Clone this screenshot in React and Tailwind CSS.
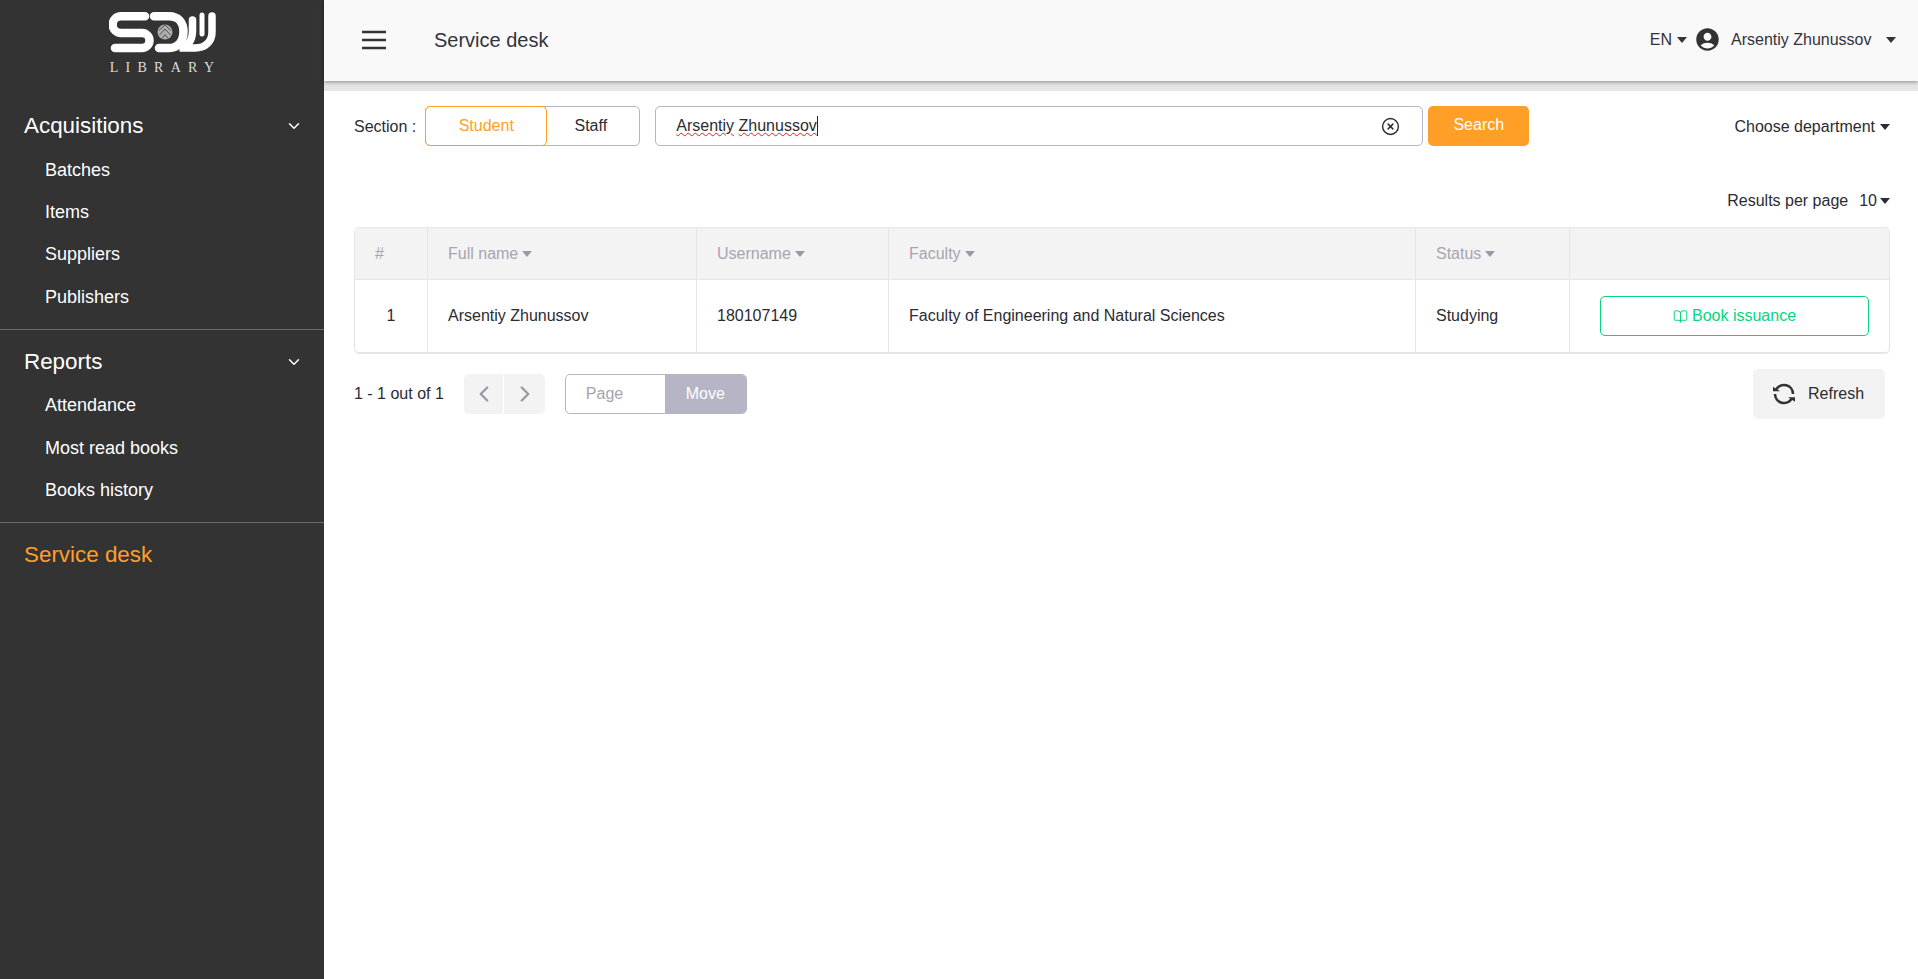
import React from 'react';
import { ChevronDown, ChevronLeft, ChevronRight, CircleX, BookOpen } from 'lucide-react';
import { MdAccountCircle } from 'react-icons/md';

const font = { fontFamily: '"Liberation Sans", Arial, sans-serif' };

function Caret({ className = '' }) {
  return (
    <svg width="10" height="6" viewBox="0 0 10 6" className={`inline-block ${className}`}>
      <path d="M0 0h10L5 6z" fill="currentColor" />
    </svg>
  );
}

function Logo() {
  return (
    <div className="flex flex-col items-center pt-[11px]">
      <svg width="107" height="43" viewBox="0 0 107 43" fill="none" stroke="#fff" strokeWidth="8.5" strokeLinecap="round">
        {/* S */}
        <path d="M36 5.300H12a8.350 8.350 0 0 0 0 16.700H33a7.500 7.500 0 0 1 0 15H6" />
        {/* D */}
        <path d="M45 5.300H60c9 0 14.500 6 14.500 15.500S69 37 60 37H50" />
        {/* W */}
        <path d="M83.500 9V20c0 9-5 17-13 17H86c11 0 17-7 17-16V5" strokeWidth="7.500" />
        <path d="M93 4V23" strokeWidth="5" />
        <circle cx="56" cy="21" r="7.500" fill="#b0b0b0" stroke="none" />
        <path d="M50.500 24l5.500-6 5.500 6M53 27.500l3-4 3 4M50 19.500l6-5.500 6 5.500" stroke="#333" strokeWidth="0.800" strokeLinecap="butt" />
      </svg>
      <div className="ml-[7px] mt-[7px] text-[14px] leading-[14px] tracking-[0.52em] text-[#ddd]" style={{ fontFamily: '"Liberation Serif", serif' }}>
        LIBRARY
      </div>
    </div>
  );
}

function NavGroup({ title, items }) {
  return (
    <div className="border-b border-[#6b6b6b] pb-[10px]">
      <div className="flex h-[42px] items-center justify-between pl-6 pr-[21px] text-[22.400px] text-white">
        <span>{title}</span>
        <ChevronDown size={18} strokeWidth={2} />
      </div>
      <div className="flex flex-col pt-[2px]">
        {items.map((item) => (
          <a key={item} className="flex h-[42.400px] items-center pl-[45px] text-[18px] text-white">{item}</a>
        ))}
      </div>
    </div>
  );
}

function HeadCell({ label, className }) {
  return (
    <div className={`flex items-center gap-[4px] border-r border-[#e6e6e6] pl-5 ${className}`}>
      {label}
      <Caret className="text-[#9a9aa4]" />
    </div>
  );
}

export default function App() {
  return (
    <div className="flex min-h-screen bg-white text-[16px] text-[#2b2b33]" style={font}>
      <aside className="w-[324px] shrink-0 bg-[#333333]">
        <Logo />
        <div className="mt-[30px]">
          <NavGroup title="Acquisitions" items={['Batches', 'Items', 'Suppliers', 'Publishers']} />
          <div className="pt-[11px]">
            <NavGroup title="Reports" items={['Attendance', 'Most read books', 'Books history']} />
          </div>
          <div className="flex h-[64px] items-center pl-6 text-[22.400px] text-[#ff9f27]">Service desk</div>
        </div>
      </aside>

      <div className="min-w-0 flex-1">
        <header className="relative z-10 flex h-[81px] items-center bg-[#f9f9f9] pb-[2px] pl-[38px] pr-[22px] shadow-[0_1px_4px_rgba(0,0,0,0.4)]">
          <svg width="24" height="20" viewBox="0 0 24 20" className="shrink-0 text-[#333]">
            <path d="M0 2h24M0 10h24M0 18h24" stroke="currentColor" strokeWidth="2.600" />
          </svg>
          <span className="ml-[48px] text-[20px] text-[#33333b]">Service desk</span>
          <div className="ml-auto flex items-center text-[16px] text-[#33333b]">
            <span>EN</span>
            <Caret className="ml-[5px]" />
            <MdAccountCircle size={27} className="ml-[7px] text-[#333]" />
            <span className="ml-[10px]">Arsentiy Zhunussov</span>
            <Caret className="ml-[14.500px]" />
          </div>
        </header>
        <div className="h-[10px] bg-[#e5e5e5]" />

        <main className="pl-[30px] pr-[28px]">
          <div className="mt-[15px] flex h-[40px] items-center">
            <span className="mr-[9px] pt-[2px]">Section :</span>
            <div className="flex h-full rounded-[5px] border border-[#b5b5c5]">
              <button className="-m-px w-[122px] rounded-[5px] border border-[#ff9f27] text-[#ff9f27]">Student</button>
              <button className="w-[93px] pr-[4px]">Staff</button>
            </div>
            <div className="ml-[15px] flex h-full w-[768px] items-center rounded-[5px] border border-[#b5b5c5] pl-[20px] pr-[22px]">
              <span className="underline decoration-[#e02020] decoration-wavy decoration-1">Arsentiy</span>
              <span className="whitespace-pre"> </span>
              <span className="underline decoration-[#e02020] decoration-wavy decoration-1">Zhunussov</span>
              <span className="h-[20px] w-px bg-[#222]" />
              <CircleX size={19} strokeWidth={1.800} className="ml-auto text-[#2b2b33]" />
            </div>
            <button className="ml-[5px] h-full w-[101px] rounded-[5px] bg-[#ff9f27] pb-[2px] text-white">Search</button>
            <div className="ml-auto flex items-center gap-[5px] pt-[2px]">
              Choose department
              <Caret />
            </div>
          </div>

          <div className="mt-[46px] flex h-[18px] items-center justify-end">
            <span>Results per page</span>
            <span className="ml-[11px]">10</span>
            <Caret className="ml-[3px]" />
          </div>

          <div className="mt-[17px] overflow-hidden rounded-[5px] border border-b-[2px] border-[#e6e6e6]">
            <div className="flex h-[52px] border-b border-[#e6e6e6] bg-[#f3f3f3] text-[#a5a5b0]">
              <div className="flex w-[73px] items-center border-r border-[#e6e6e6] pl-5">#</div>
              <HeadCell label="Full name" className="w-[269px]" />
              <HeadCell label="Username" className="w-[192px]" />
              <HeadCell label="Faculty" className="w-[527px]" />
              <HeadCell label="Status" className="w-[154px]" />
              <div className="flex-1" />
            </div>
            <div className="flex h-[72px]">
              <div className="flex w-[73px] items-center justify-center border-r border-[#e6e6e6]">1</div>
              <div className="flex w-[269px] items-center border-r border-[#e6e6e6] pl-5">Arsentiy Zhunussov</div>
              <div className="flex w-[192px] items-center border-r border-[#e6e6e6] pl-5">180107149</div>
              <div className="flex w-[527px] items-center border-r border-[#e6e6e6] pl-5">Faculty of Engineering and Natural Sciences</div>
              <div className="flex w-[154px] items-center border-r border-[#e6e6e6] pl-5">Studying</div>
              <div className="flex flex-1 items-center pl-[30px] pr-[20px]">
                <button className="flex h-[40px] w-full items-center justify-center gap-[4px] rounded-[5px] border border-[#06d67c] text-[#06d67c]">
                  <BookOpen size={15} strokeWidth={1.600} />
                  Book issuance
                </button>
              </div>
            </div>
          </div>

          <div className="mt-[15px] flex h-[50px] items-center pr-[5px]">
            <span>1 - 1 out of 1</span>
            <div className="ml-[20px] flex h-[40px] overflow-hidden rounded-[5px] bg-[#f3f3f3] text-[#9a9aa4]">
              <button className="flex w-[40px] items-center justify-center border-r border-white pl-px">
                <ChevronLeft size={26} strokeWidth={2.200} />
              </button>
              <button className="flex w-[41px] items-center justify-center pl-px">
                <ChevronRight size={26} strokeWidth={2.200} />
              </button>
            </div>
            <div className="ml-[20px] flex h-[40px] overflow-hidden rounded-[5px] border border-[#b5b5c5]">
              <div className="flex w-[99px] items-center pl-[20px] text-[#a5a5b0]">Page</div>
              <button className="w-[81px] bg-[#b5b5c5] text-white">Move</button>
            </div>
            <button className="ml-auto flex h-[50px] w-[132px] items-center gap-[12px] rounded-[5px] bg-[#f3f3f3] pl-[19px]">
              <svg width="24" height="24" viewBox="0 0 24 24" fill="none" className="text-[#333]">
                <path d="M4.200 7.500A9 9 0 0 1 21 12M19.800 16.500A9 9 0 0 1 3 12" stroke="currentColor" strokeWidth="2.600" />
                <path d="M1 4.700V9.200H8zM16 15.300H23V19.700z" fill="currentColor" />
              </svg>
              Refresh
            </button>
          </div>
        </main>
      </div>
    </div>
  );
}
